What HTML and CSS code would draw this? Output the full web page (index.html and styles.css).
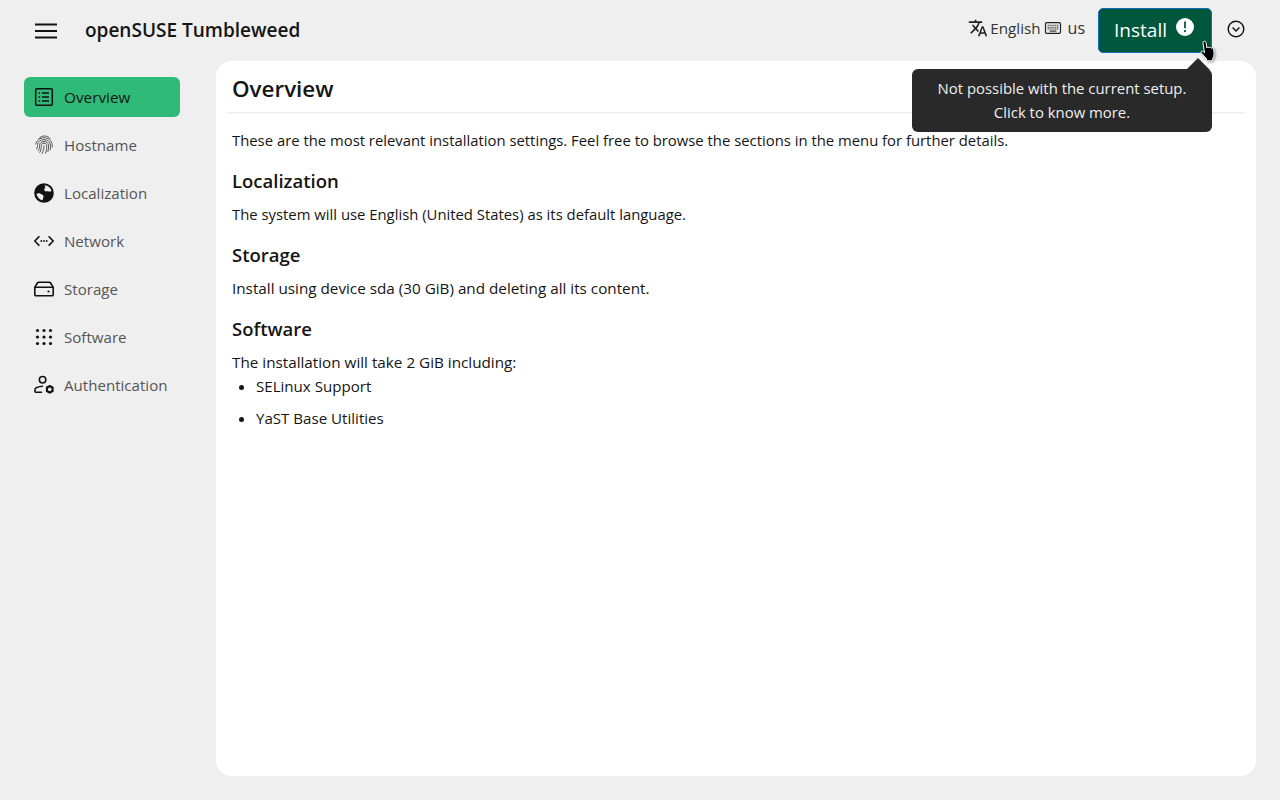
FILE: index.html
```html
<!DOCTYPE html>
<html lang="en">
<head>
<meta charset="utf-8">
<title>openSUSE Tumbleweed</title>
<link rel="stylesheet" href="styles.css">
</head>
<body>
<div class="page">
  <header class="topbar">
    <button class="menu-btn" aria-label="Menu">
      <svg width="24" height="24" viewBox="0 0 24 24"><path d="M1 5.500h22M1 12h22M1 18.500h22" fill="none" stroke="#111" stroke-width="2"/></svg>
    </button>
    <div class="product">openSUSE Tumbleweed</div>
    <div class="top-actions">
      <div class="lang">
        <svg class="ic-lang" width="20" height="20" viewBox="0 -960 960 960"><path fill="#222" d="m476-80 182-480h84L924-80h-84l-43-122H603L560-80h-84ZM160-200l-56-56 202-202q-35-35-63.500-80T190-640h84q20 39 40 68t48 58q33-33 68.500-92.500T484-720H40v-80h280v-80h80v80h280v80H564q-21 72-63 148t-83 116l96 98-30 82-122-125-202 201Zm468-72h144l-72-204-72 204Z"/></svg>
        <span>English</span>
        <svg class="ic-kbd" width="18" height="18" viewBox="0 0 18 18"><rect x="1.500" y="3.600" width="15" height="10.800" rx="1.200" fill="none" stroke="#222" stroke-width="1.200"/><path d="M3.600 6.200h10.800M3.600 8.200h10.800M3.600 10h10.800" stroke="#222" stroke-width="1.100" stroke-dasharray="1.200 .7" fill="none"/><path d="M5.600 12.100h6.800" stroke="#222" stroke-width="1.100" fill="none"/></svg>
        <span class="kbd-name">us</span>
      </div>
      <button class="install">
        <span>Install</span>
        <svg width="20" height="20" viewBox="0 0 20 20"><circle cx="10" cy="10" r="9" fill="#fff"/><path d="M10 4.600v6.600" stroke="#00573c" stroke-width="1.800" fill="none"/><circle cx="10" cy="14.200" r="1.100" fill="#00573c"/></svg>
      </button>
      <button class="more" aria-label="More">
        <svg width="20" height="20" viewBox="0 0 20 20"><circle cx="10" cy="10" r="7.800" fill="none" stroke="#111" stroke-width="1.400"/><path d="M6.600 8.600 10 12l3.400-3.400" fill="none" stroke="#111" stroke-width="1.400"/></svg>
      </button>
    </div>
  </header>
  <div class="body">
    <nav class="sidebar">
      <a class="nav-item active">
        <svg width="20" height="20" viewBox="0 0 20 20"><rect x="1.700" y="1.700" width="16.600" height="16.600" rx="1.200" fill="none" stroke="#111" stroke-width="1.500"/><path d="M8 6h7M8 10h7M8 14h7" stroke="#111" stroke-width="1.500"/><path d="M4.600 6h1.600M4.600 10h1.600M4.600 14h1.600" stroke="#111" stroke-width="1.600"/></svg>
        <span>Overview</span>
      </a>
      <a class="nav-item">
        <svg width="20" height="20" viewBox="0 0 20 20" fill="none" stroke="#555" stroke-width="1"><path d="M4.400 4.200C6 2 8 1 10.600 1s4.600 1.200 5.800 3.200"/><path d="M1.800 9.500C2.300 5.500 5.800 2.800 10 2.800c4.400 0 7.800 3 8.200 7.100v2.600"/><path d="M2.200 14.200C3.800 12.500 3.500 10.900 3.600 9.700 3.900 6.500 6.700 4.700 10 4.700s6.200 2.100 6.400 5.300c.1 1.900.1 3.600-.2 5.200"/><path d="M3.800 16c1.700-1.500 1.700-3.900 1.700-5.700C5.600 8.100 7.600 6.500 10 6.500s4.400 1.600 4.500 3.800c.1 2.500 0 4.700-.7 6.700"/><path d="M5.500 17.600c1.500-1.800 1.800-4.700 1.800-7.200 0-1.300 1.200-2.200 2.700-2.200s2.700.9 2.700 2.200c.1 3-.3 5.900-1.400 8.200"/><path d="M7.800 18.800C9.200 16.400 10 13.400 10 10.400"/></svg>
        <span>Hostname</span>
      </a>
      <a class="nav-item">
        <svg width="20" height="20" viewBox="0 0 20 20"><circle cx="10" cy="10" r="9.800" fill="#111"/><path fill="#efefef" d="M10.800 2.200c3 .2 5.400 2.100 6.500 4.800.3.900-.2 1.600-1.300 1.600-1.700 0-2.600-.7-4-.3-1.100.3-1.900-.7-1.700-2 .2-1.200 1.200-1.400 1-2.300-.1-.7-1.100-1.700-.5-1.800ZM2.400 11.100c1.100-.9 2.800-1 4.200-.3 1.300.6 2.500 1 2.900 2.200.3 1.100-.6 1.900-.6 2.800 0 .9-.2 1.500-1.100 1.500-2.500-.8-4.500-3.300-5.400-6.200Z"/></svg>
        <span>Localization</span>
      </a>
      <a class="nav-item">
        <svg width="20" height="20" viewBox="0 0 20 20"><path d="M5.400 5.400.8 10l4.600 4.600M14.600 5.400l4.600 4.600-4.600 4.600" fill="none" stroke="#111" stroke-width="1.500"/><circle cx="7.300" cy="10" r=".9" fill="#111"/><circle cx="10" cy="10" r=".9" fill="#111"/><circle cx="12.700" cy="10" r=".9" fill="#111"/></svg>
        <span>Network</span>
      </a>
      <a class="nav-item">
        <svg width="20" height="20" viewBox="0 0 20 20"><path d="M.8 8.200 3.400 4C3.700 3.500 4.200 3.200 4.800 3.200h10.400c.6 0 1.100.3 1.400.8l2.600 4.200v7.200c0 .8-.6 1.400-1.400 1.400H2.200c-.8 0-1.400-.6-1.400-1.400V8.200Zm0 0h18.400" fill="none" stroke="#111" stroke-width="1.600"/><circle cx="14.500" cy="12.500" r="1.100" fill="#111"/></svg>
        <span>Storage</span>
      </a>
      <a class="nav-item">
        <svg width="20" height="20" viewBox="0 0 20 20" fill="#111"><circle cx="3.500" cy="3.500" r="1.600"/><circle cx="10" cy="3.500" r="1.600"/><circle cx="16.500" cy="3.500" r="1.600"/><circle cx="3.500" cy="10" r="1.600"/><circle cx="10" cy="10" r="1.600"/><circle cx="16.500" cy="10" r="1.600"/><circle cx="3.500" cy="16.500" r="1.600"/><circle cx="10" cy="16.500" r="1.600"/><circle cx="16.500" cy="16.500" r="1.600"/></svg>
        <span>Software</span>
      </a>
      <a class="nav-item">
        <svg class="ic-wide" width="21" height="20" viewBox="0 0 22 20"><circle cx="9" cy="4.500" r="3.400" fill="none" stroke="#111" stroke-width="1.600"/><path d="M1 17.500v-2.300c0-1 .4-1.800 1.400-2.300C4.500 11.800 6.500 11.300 9.500 11.300M1 17.500h7.500" fill="none" stroke="#111" stroke-width="1.600"/><circle cx="16.500" cy="14.500" r="3" fill="none" stroke="#111" stroke-width="2.100"/><path d="M16.500 10v1.800M16.500 17.200V19M12.600 12.200l1.600.9M18.800 15.900l1.600.9M12.600 16.800l1.600-.9M18.800 13.100l1.600-.9" stroke="#111" stroke-width="2"/></svg>
        <span>Authentication</span>
      </a>
    </nav>
    <main class="panel">
      <h1 class="page-title">Overview</h1>
      <div class="content">
        <p class="intro">These are the most relevant installation settings. Feel free to browse the sections in the menu for further details.</p>
        <section>
          <h2>Localization</h2>
          <p>The system will use English (United States) as its default language.</p>
        </section>
        <section>
          <h2>Storage</h2>
          <p class="wide">Install using device sda (30 GiB) and deleting all its content.</p>
        </section>
        <section>
          <h2>Software</h2>
          <p class="wide">The installation will take 2 GiB including:</p>
          <ul>
            <li>SELinux Support</li>
            <li>YaST Base Utilities</li>
          </ul>
        </section>
      </div>
    </main>
  </div>
  <div class="tooltip">
    <span class="tip-arrow"></span>
    Not possible with the current setup.<br>Click to know more.
  </div>
  <svg class="cursor" width="22" height="24" viewBox="0 0 22 24"><path d="M4.500 1.500c1-.7 2.400-.2 2.600 1l.7 5.300c.4-.9 2-.9 2.400.1.400-.8 2-.7 2.300.4.600-.7 2-.4 2.200.7l.4 4.800c0 2-.5 3.500-1.400 4.800v2.200H7.500v-2l-5-5.600c-.9-1-.3-2.200.8-2 .8.100 1.700 1 2.200 1.500L4 3c-.1-.7 0-1.100.5-1.500Z" fill="#000" stroke="#fff" stroke-width="1"/></svg>
</div>
</body>
</html>
```
FILE: styles.css
```css
* { box-sizing: border-box; }
html, body { margin: 0; height: 100%; }
body {
  background: #efefef;
  color: #151515;
  font-family: "Open Sans", "Noto Sans", sans-serif;
  font-size: 15px;
  line-height: 24px;
}
.page { position: relative; width: 1280px; height: 800px; overflow: hidden; display: flex; flex-direction: column; }
button { font: inherit; border: 0; background: none; padding: 0; color: inherit; }

.topbar { height: 61px; display: flex; align-items: center; padding: 0 32px 0 34px; flex: none; }
.menu-btn { width: 24px; height: 24px; margin-right: 27px; display: flex; }
.product { font-size: 19px; font-weight: 600; line-height: 28px; margin-top: -1px; }
.top-actions { margin-left: auto; display: flex; align-items: center; margin-right: 2px; }
.lang { display: flex; align-items: center; font-size: 15.200px; color: #333; margin-top: -6px; }
.ic-lang { margin-right: 2px; }
.ic-kbd { margin: 0 6px 0 3px; }
.kbd-name { font-size: 16px; }
.install {
  margin-left: 13px;
  width: 114px; height: 45px;
  background: #00573c;
  border: 1px solid #0f6dbd;
  border-radius: 5px;
  color: #fff;
  font-size: 19px;
  font-weight: 500;
  display: flex; align-items: center; justify-content: center; gap: 8px;
  padding: 0 1px 2px 0;
}
.install svg { margin-top: -6px; }
.more { margin-left: 14px; width: 20px; height: 20px; margin-top: -4px; display: flex; }

.body { flex: 1; display: flex; padding: 0 24px 24px; gap: 36px; min-height: 0; }
.sidebar { width: 156px; padding-top: 16px; display: flex; flex-direction: column; gap: 8px; flex: none; }
.nav-item { height: 40px; display: flex; align-items: center; gap: 10px; padding: 0 10px; border-radius: 6px; color: #555; font-size: 15.100px; }
.nav-item.active { background: #30ba78; color: #151515; font-weight: 500; font-size: 15.300px; }
.ic-wide { margin-right: -1px; }

.panel { flex: 1; background: #fff; border-radius: 16px; padding: 0 8px; min-width: 0; }
.page-title { margin: 0; font-size: 22.400px; font-weight: 600; line-height: 30px; padding: 13px 8px 8px; box-shadow: 0 3px 3px -3px rgba(0,0,0,.2); }
.content { padding: 16px 8px; }
.content p { margin: 0; font-size: 14.850px; }
.content p.wide { font-size: 15.250px; }
section { margin-top: 16px; }
h2 { margin: 0 0 8px; font-size: 18.500px; font-weight: 600; line-height: 26px; }
ul { margin: 0; padding-left: 24px; font-size: 15.100px; }
li + li { margin-top: 8px; }

.tooltip {
  position: absolute; left: 912px; top: 69px; width: 300px; height: 63px;
  background: #292929; color: #f0f0f0; border-radius: 6px;
  font-size: 14.900px; text-align: center; padding: 7px 16px;
}
.tip-arrow {
  position: absolute; right: 2px; top: -11px; width: 0; height: 0;
  border-left: 12px solid transparent; border-right: 12px solid transparent; border-bottom: 12px solid #292929;
}
.cursor { position: absolute; left: 1199px; top: 40px; filter: drop-shadow(1px 1px 1px rgba(0,0,0,.4)); }
```
